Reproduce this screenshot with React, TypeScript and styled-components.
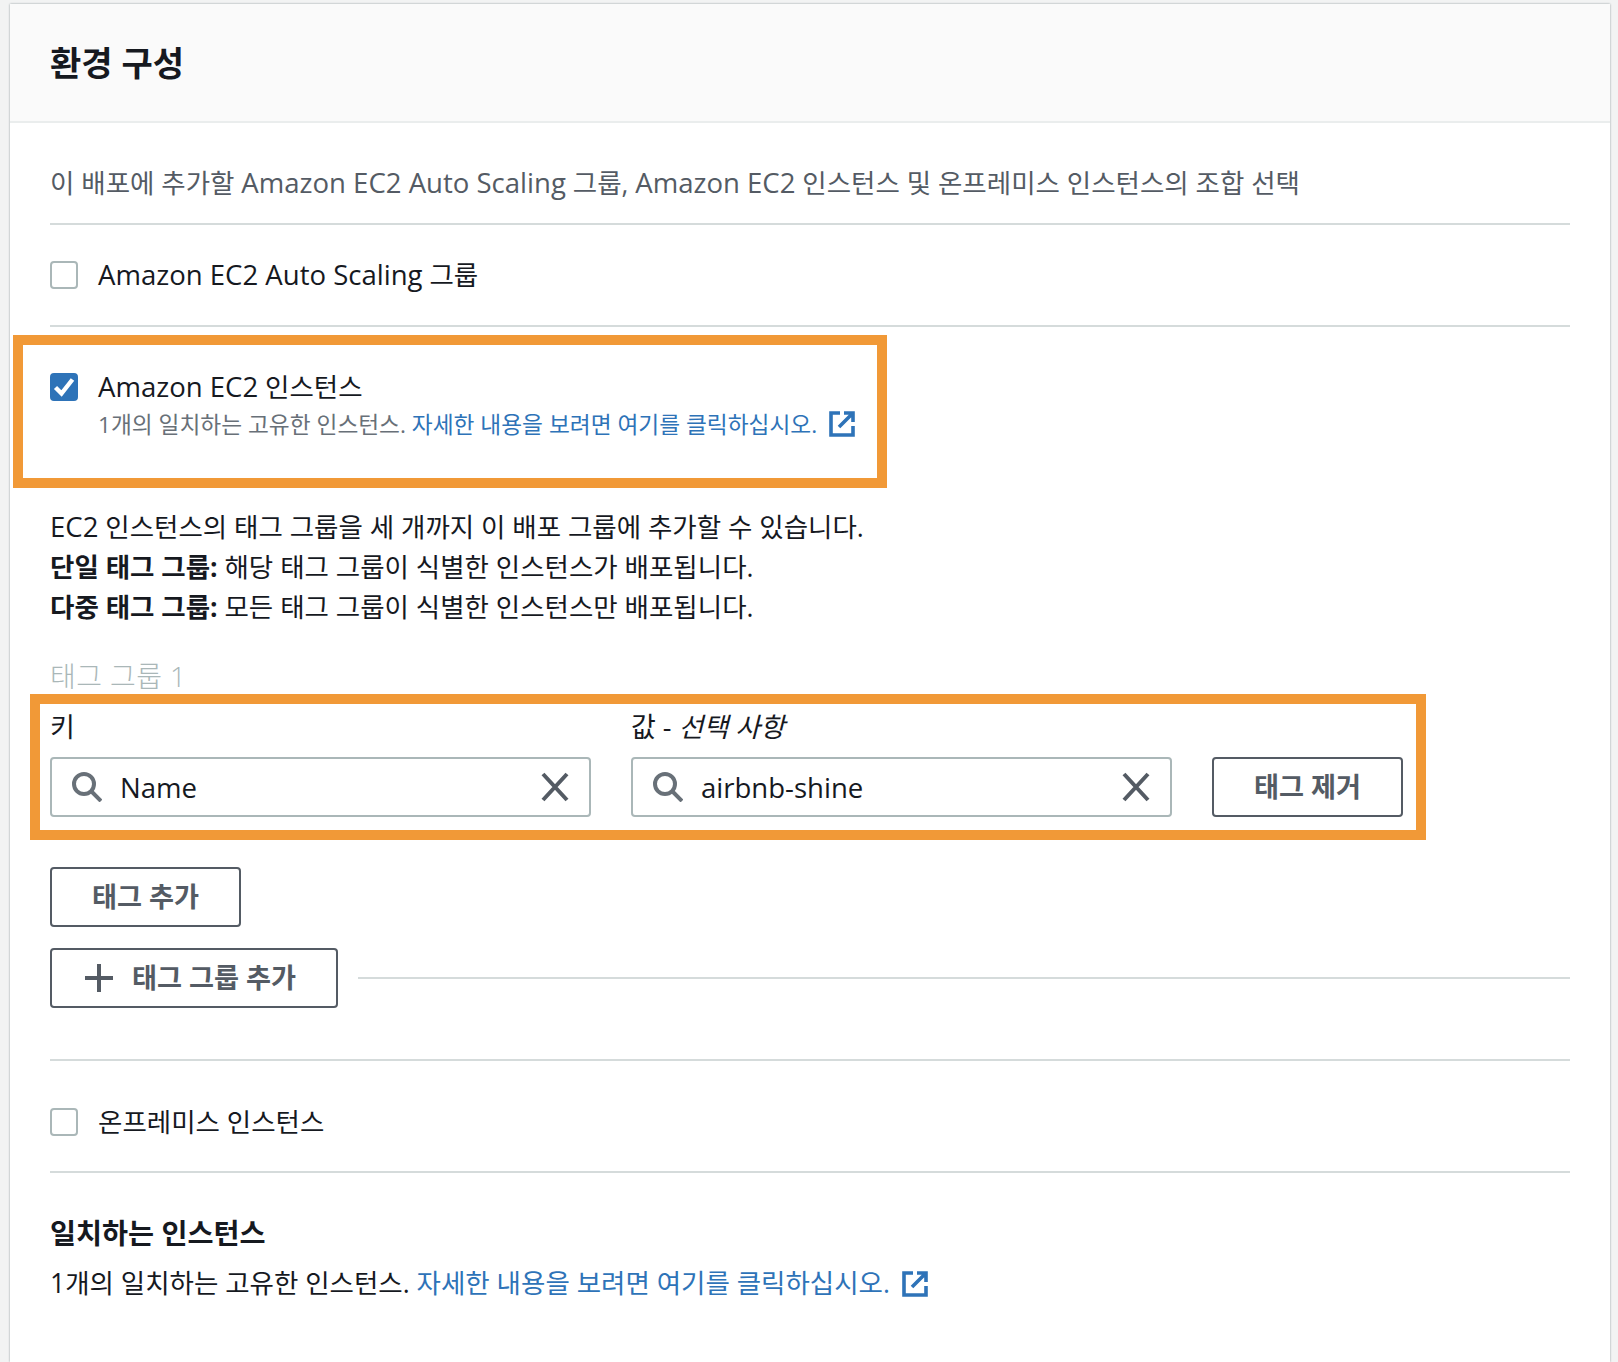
import React from "react";
import styled, { createGlobalStyle } from "styled-components";

const GlobalStyle = createGlobalStyle`
  html, body {
    margin: 0;
    padding: 0;
    background: #f2f3f3;
  }
  * {
    box-sizing: border-box;
  }
`;

const Panel = styled.div`
  margin: 4px 8px 0 10px;
  min-height: 1358px;
  background: #fff;
  color: #16191f;
  font-family: "Open Sans", "Noto Sans CJK KR", sans-serif;
  font-size: 26.5px;
  line-height: 40px;
  box-shadow: 0 0 2px rgba(0, 28, 36, 0.4);
`;

// latin runs sit a little bigger than the hangul next to them
const Latin = styled.span`
  font-size: 1.04em;
`;

const Header = styled.div`
  height: 119px;
  padding: 0 40px;
  display: flex;
  align-items: center;
  background: #fafafa;
  border-bottom: 2px solid #eaeded;
`;

const Title = styled.h2`
  margin: 0;
  font-size: 34px;
  font-weight: 700;
`;

const Body = styled.div`
  padding: 40px 40px 0;
`;

const Description = styled.div`
  color: #545b64;
  margin-bottom: 20px;
`;

const Divider = styled.div`
  height: 2px;
  background: #d5dbdb;
`;

const CheckRow = styled.div<{ $height: number; $shift?: number }>`
  height: ${(p) => p.$height}px;
  padding-top: ${(p) => p.$shift ?? 0}px;
  display: flex;
  align-items: center;
  gap: 20px;
`;

const Box = styled.span<{ $checked?: boolean; $top?: number }>`
  flex: none;
  width: 28px;
  height: 28px;
  margin-top: ${(p) => p.$top ?? 0}px;
  display: flex;
  align-items: center;
  justify-content: center;
  border-radius: 4px;
  border: 2px solid ${(p) => (p.$checked ? "#2e73b8" : "#aab7b8")};
  background: ${(p) => (p.$checked ? "#2e73b8" : "#fff")};
`;

const HighlightInstance = styled.div`
  width: 874px;
  height: 153px;
  margin: 8px 0 0 -37px;
  padding: 22px 0 0 27px;
  display: flex;
  align-items: flex-start;
  gap: 20px;
  border: 10px solid #f19937;
`;

const SubText = styled.div`
  font-size: 22.7px;
  line-height: 36px;
  color: #687078;
  white-space: nowrap;
`;

const ExtLink = styled.span`
  color: #2e73b8;
`;

const ExtIcon = styled.svg`
  display: inline-block;
  vertical-align: -4px;
  margin-left: 12px;
`;

const Paragraph = styled.p`
  margin: 19px 0 0;
`;

const GroupLabel = styled.div`
  margin-top: 31px;
  font-size: 28px;
  font-weight: 300;
  letter-spacing: 0.4px;
  line-height: 36px;
  color: #aab7b8;
`;

const HighlightTags = styled.div`
  width: 1396px;
  height: 146px;
  margin-left: -20px;
  padding: 3px 0 0 10px;
  border: 10px solid #f19937;
`;

const TagRow = styled.div`
  display: flex;
  align-items: flex-end;
`;

const Field = styled.div`
  width: 541px;
  margin-right: 40px;
`;

const FieldLabel = styled.div`
  font-size: 27px;
  margin-bottom: 10px;
`;

const SearchInput = styled.div`
  height: 60px;
  display: flex;
  align-items: center;
  padding: 0 18px 0 20px;
  border: 2px solid #aab7b8;
  border-radius: 4px;
  background: #fff;
`;

const InputText = styled.span`
  flex: 1;
  margin-left: 18px;
  padding-top: 2px;
`;

const Button = styled.div<{ $width: number; $inset?: number }>`
  width: ${(p) => p.$width}px;
  height: 60px;
  padding-right: ${(p) => p.$inset ?? 0}px;
  display: flex;
  align-items: center;
  justify-content: center;
  gap: 18px;
  border: 2px solid #545b64;
  border-radius: 4px;
  color: #545b64;
  font-size: 27.2px;
  font-weight: 700;
  background: #fff;
`;

const AddTagRow = styled.div`
  margin-top: 27px;
`;

const AddGroupRow = styled.div`
  margin-top: 21px;
  display: flex;
  align-items: center;
  gap: 20px;
  margin-bottom: 51px;
`;

const GrowDivider = styled(Divider)`
  flex: 1;
`;

const MatchHeading = styled.div`
  margin-top: 38px;
  font-size: 28.3px;
  font-weight: 700;
  line-height: 44px;
`;

const MatchText = styled.div`
  margin-top: 8px;
`;

const SearchIcon = () => (
  <svg width="30" height="30" viewBox="0 0 30 30" fill="none" stroke="#687078" strokeWidth="4">
    <circle cx="12" cy="12" r="10" />
    <path d="M19 19 L29 29" />
  </svg>
);

const ClearIcon = () => (
  <svg width="32" height="32" viewBox="0 0 32 32" fill="none" stroke="#545b64" strokeWidth="4">
    <path d="M4 3 L28 29 M28 3 L4 29" />
  </svg>
);

const PlusIcon = () => (
  <svg width="30" height="30" viewBox="0 0 30 30" fill="none" stroke="#545b64" strokeWidth="4">
    <path d="M15 1 V29 M1 15 H29" />
  </svg>
);

const CheckIcon = () => (
  <svg width="22" height="22" viewBox="0 0 22 22" fill="none" stroke="#fff" strokeWidth="4.4">
    <path d="M2.5 11.5 L8.5 17.5 L19.5 3.5" />
  </svg>
);

const ExternalIcon: React.FC<{ size: number }> = ({ size }) => (
  <ExtIcon width={size} height={size} viewBox="0 0 26 26" fill="none" stroke="#2e73b8" strokeWidth="3.6">
    <path d="M11 2 H2 V24 H24 V15" />
    <path d="M10 16 L23 3 M15 2 H24 V11" />
  </ExtIcon>
);

const TagField: React.FC<{ label: React.ReactNode; value: string }> = ({ label, value }) => (
  <Field>
    <FieldLabel>{label}</FieldLabel>
    <SearchInput>
      <SearchIcon />
      <InputText>
        <Latin>{value}</Latin>
      </InputText>
      <ClearIcon />
    </SearchInput>
  </Field>
);

export default function App() {
  return (
    <>
      <GlobalStyle />
      <Panel>
        <Header>
          <Title>환경 구성</Title>
        </Header>
        <Body>
          <Description>
            이 배포에 추가할 <Latin>Amazon EC2 Auto Scaling</Latin> 그룹, <Latin>Amazon EC2</Latin> 인스턴스 및 온프레미스
            인스턴스의 조합 선택
          </Description>
          <Divider />
          <CheckRow $height={100}>
            <Box />
            <span>
              <Latin>Amazon EC2 Auto Scaling</Latin> 그룹
            </span>
          </CheckRow>
          <Divider />
          <HighlightInstance>
            <Box $checked $top={6}>
              <CheckIcon />
            </Box>
            <div>
              <div>
                <Latin>Amazon EC2</Latin> 인스턴스
              </div>
              <SubText>
                1개의 일치하는 고유한 인스턴스. <ExtLink>자세한 내용을 보려면 여기를 클릭하십시오.</ExtLink>
                <ExternalIcon size={26} />
              </SubText>
            </div>
          </HighlightInstance>
          <Paragraph>
            <Latin>EC2</Latin> 인스턴스의 태그 그룹을 세 개까지 이 배포 그룹에 추가할 수 있습니다.
            <br />
            <b>단일 태그 그룹:</b> 해당 태그 그룹이 식별한 인스턴스가 배포됩니다.
            <br />
            <b>다중 태그 그룹:</b> 모든 태그 그룹이 식별한 인스턴스만 배포됩니다.
          </Paragraph>
          <GroupLabel>태그 그룹 1</GroupLabel>
          <HighlightTags>
            <TagRow>
              <TagField label="키" value="Name" />
              <TagField
                label={
                  <>
                    값 - <i>선택 사항</i>
                  </>
                }
                value="airbnb-shine"
              />
              <Button $width={191}>태그 제거</Button>
            </TagRow>
          </HighlightTags>
          <AddTagRow>
            <Button $width={191}>태그 추가</Button>
          </AddTagRow>
          <AddGroupRow>
            <Button $width={288} $inset={8}>
              <PlusIcon />
              태그 그룹 추가
            </Button>
            <GrowDivider />
          </AddGroupRow>
          <Divider />
          <CheckRow $height={110} $shift={11}>
            <Box />
            <span>온프레미스 인스턴스</span>
          </CheckRow>
          <Divider />
          <MatchHeading>일치하는 인스턴스</MatchHeading>
          <MatchText>
            1개의 일치하는 고유한 인스턴스. <ExtLink>자세한 내용을 보려면 여기를 클릭하십시오.</ExtLink>
            <ExternalIcon size={26} />
          </MatchText>
        </Body>
      </Panel>
    </>
  );
}
